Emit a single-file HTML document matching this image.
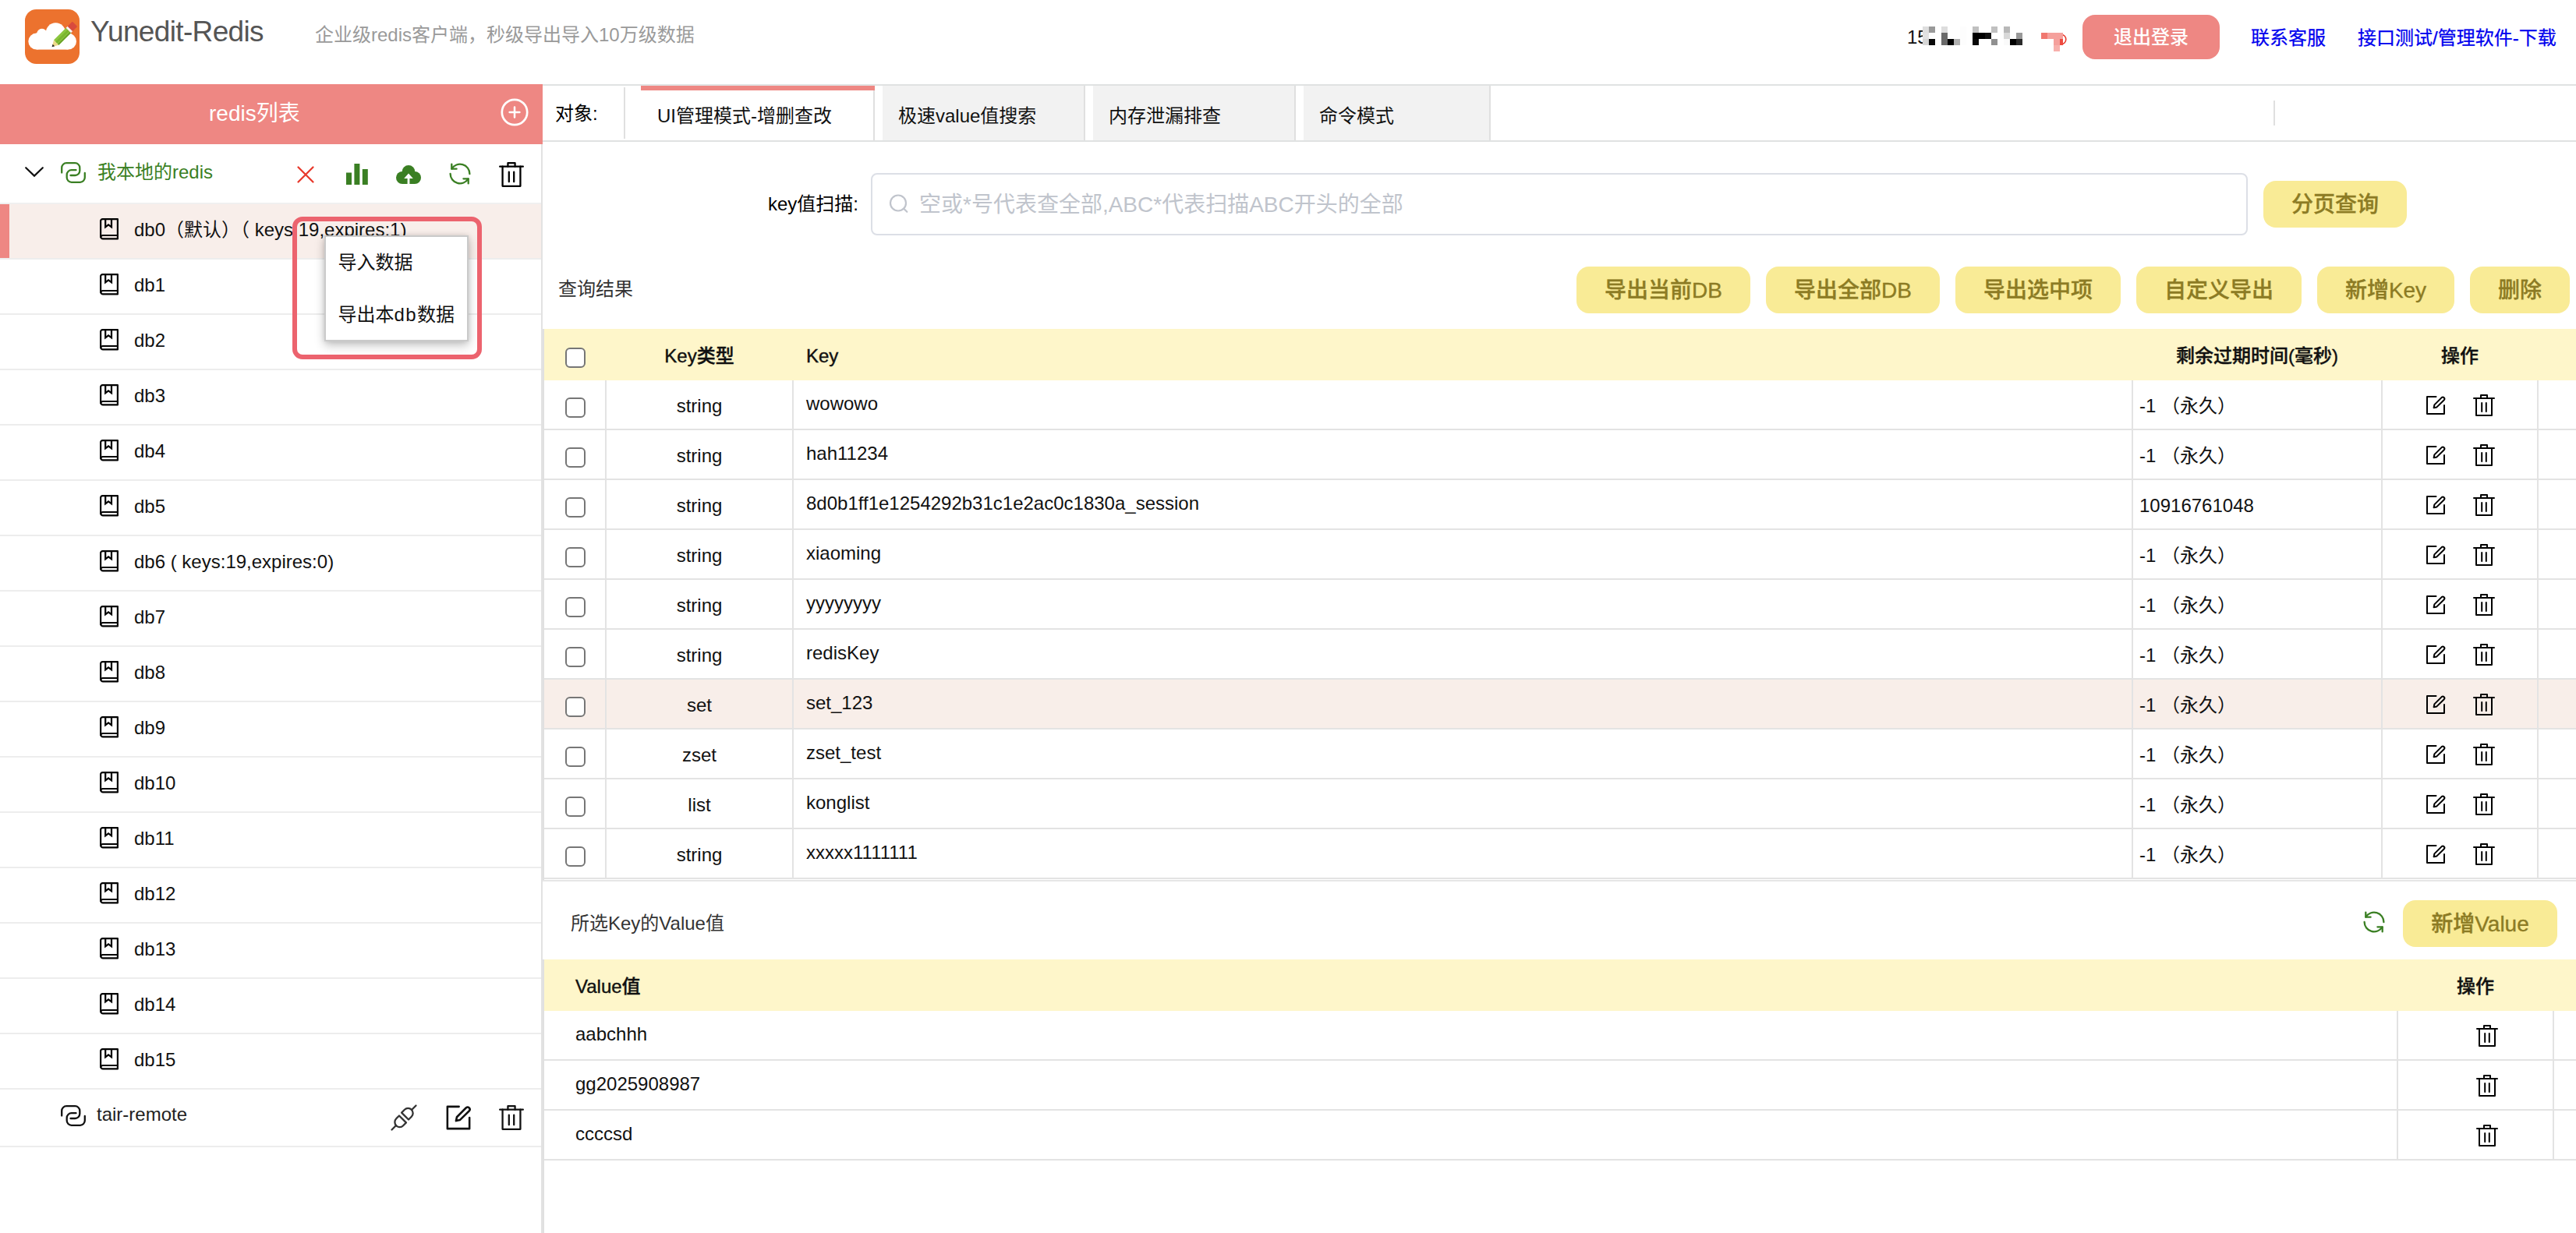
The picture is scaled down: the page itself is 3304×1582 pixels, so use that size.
<!DOCTYPE html>
<html lang="zh-CN"><head><meta charset="utf-8"><title>Yunedit-Redis</title>
<style>
*{box-sizing:border-box;margin:0;padding:0}
html,body{width:3304px;height:1582px;overflow:hidden;background:#fff}
body{position:relative;font-family:"Liberation Sans","Noto Sans CJK SC",sans-serif;color:#000;font-size:24px}
.abs{position:absolute}
svg{display:block;overflow:visible}
/* header */
#logo{left:32px;top:12px;width:70px;height:70px}
#brand{left:116px;top:17px;height:48px;line-height:48px;font-size:37px;letter-spacing:-.65px;color:#555;white-space:nowrap}
#slogan{left:404px;top:28px;height:34px;line-height:34px;font-size:24px;color:#9a9a9a;white-space:nowrap}
#phone{left:2446px;top:31px;height:34px;line-height:34px;font-size:24px;color:#111;white-space:nowrap}
#logout{left:2671px;top:19px;width:176px;height:57px;line-height:57px;border-radius:16px;background:#ee8783;color:#fff;font-size:24px;font-weight:500;text-align:center}
.lnk{-webkit-text-stroke:.25px #0000ee;color:#0000ee;font-size:24px;height:34px;line-height:34px;top:31.5px;white-space:nowrap}
/* sidebar */
#sbhead{left:0;top:108px;width:696px;height:77px;background:#ee8783}
#sbtitle{left:268px;top:128px;height:36px;line-height:36px;font-size:28px;color:#fff;white-space:nowrap}
#sbline{left:694px;top:185px;width:2px;height:1397px;background:#e2e2e2}
.srow{left:0;width:694px;height:71px;border-bottom:2px solid #ededed}
.srow.sel{background:#f8eeea;border-bottom-color:#ededed}
.srow.sel:before{content:"";position:absolute;left:0;top:0;width:12px;height:69px;background:#ee8783}

.srow .t{position:absolute;left:172px;top:15.5px;height:34px;line-height:34px;font-size:24px;white-space:nowrap;color:#111}
.crow{left:0;width:694px;height:77px;border-bottom:2px solid #ededed}
.crow .t{position:absolute;left:125px;top:19px;height:34px;line-height:34px;font-size:24px;white-space:nowrap}
.ic{position:absolute}
/* context menu */
#redbox{left:375px;top:278px;width:243px;height:183px;border:6px solid #ec636e;border-radius:13px}
#menu{left:416px;top:302px;width:185px;height:136px;background:#fff;border:2px solid #cacaca;box-shadow:0 5px 12px rgba(0,0,0,.24),0 0 6px rgba(0,0,0,.10)}
#menu div{position:absolute;left:15.5px;height:34px;line-height:34px;font-size:24px;white-space:nowrap;color:#111}
/* tabs */
#tabtop{left:696px;top:108px;width:2608px;height:2px;background:#e0e2e2}
#tabbot{left:696px;top:180px;width:2608px;height:2px;background:#e0e2e2}
#objlabel{left:712px;top:129px;height:34px;line-height:34px;font-size:24px;white-space:nowrap}
.vdiv{width:2px;background:#e0e0e0}
.tab{top:110px;height:70px;background:#f2f2f2;border-right:2px solid #e0e0e0;font-size:24px;line-height:34px;padding:22px 0 0 20px;white-space:nowrap;color:#111}
.tab.on{background:#fff}
.tab.on:before{content:"";position:absolute;left:0;top:0;right:-2px;height:6px;background:#ee8783}
/* search */
#klabel{left:985px;top:245px;height:34px;line-height:34px;font-size:24px;white-space:nowrap}
#kinput{left:1117px;top:222px;width:1766px;height:80px;border:2px solid #dcdfe6;border-radius:8px;background:#fff}
#kinput span{position:absolute;left:60px;top:20px;height:38px;line-height:38px;font-size:28px;color:#c0c4cc;white-space:nowrap}
.btn{height:60px;line-height:60px;border-radius:16px;background:#f9eb96;color:#8c7b24;font-size:28px;font-weight:500;padding-top:1px;-webkit-text-stroke:.35px #8c7b24;text-align:center;white-space:nowrap}
#qlabel{left:716px;top:354px;height:34px;line-height:34px;font-size:24px;color:#333;white-space:nowrap}
/* tables */
.thead{background:#fef6ca;left:698px;width:2606px;height:66px}
.th{position:absolute;top:2px;height:66px;line-height:66px;font-size:24px;font-weight:500;-webkit-text-stroke:.4px #111;white-space:nowrap;color:#111}
.tr{left:698px;width:2606px;height:64px;border-bottom:2px solid #e3e3e3;background:#fff}
.tr.sel{background:#f8eee9}
.td{position:absolute;top:0;height:62px;line-height:62px;font-size:24px;white-space:nowrap;color:#111}
.vb{position:absolute;top:0;width:2px;height:64px;background:#e3e3e3}
.cb{position:absolute;left:27px;width:26px;height:26px;border:2px solid #767676;border-radius:6px;background:#fff}
.tl{left:696px;width:2px;background:#e0e0e0}
.td.ty{top:2px}.td.k{top:-1px}.td.ex{top:1.5px}
</style></head>
<body>
<svg class="abs" id="logo" width="70" height="70" viewBox="0 0 70 70">
<rect width="70" height="70" rx="14.5" fill="#ec722e"/>
<g fill="#fff"><circle cx="39.4" cy="29.8" r="12.6"/><circle cx="21.8" cy="31.4" r="6.6"/><circle cx="14.8" cy="41.1" r="10.5"/><circle cx="55.5" cy="41.1" r="10.5"/><rect x="14.8" y="30" width="40.7" height="21.6"/></g>
<g transform="translate(34.6 48.2) rotate(-45)">
<path d="M0 0L8 -4.5V4.5Z" fill="#ecd98a"/><path d="M0 0L3.2 -1.8V1.8Z" fill="#222"/>
<rect x="8" y="-4.5" width="22" height="9" fill="#8cc63f"/><rect x="8" y="-1.5" width="22" height="3" fill="#7ab52f"/><rect x="8" y="2.6" width="22" height="1.9" fill="#6aa12a"/>
<rect x="30" y="-4.5" width="3" height="9" fill="#f4f4f4"/><rect x="33" y="-4.5" width="8.6" height="9" rx="1" fill="#d94a3d"/></g>
</svg>
<div class="abs" id="brand">Yunedit-Redis</div>
<div class="abs" id="slogan">企业级redis客户端，秒级导出导入10万级数据</div>
<div class="abs" id="phone">15</div>
<svg class="abs" style="left:0;top:0" width="3304" height="100" viewBox="0 0 3304 100"><rect x="2466" y="34" width="8" height="8" fill="#dedede"/><rect x="2466" y="42" width="8" height="8" fill="#e2e2e2"/><rect x="2466" y="50" width="8" height="8" fill="#d6d6d6"/><rect x="2474" y="34" width="8" height="8" fill="#999"/><rect x="2474" y="42" width="8" height="8" fill="#fcfcfc"/><rect x="2474" y="50" width="8" height="8" fill="#0a0a0a"/><rect x="2490" y="34" width="8" height="8" fill="#ddd"/><rect x="2490" y="42" width="8" height="8" fill="#6a6a6a"/><rect x="2490" y="50" width="8" height="8" fill="#6a6a6a"/><rect x="2498" y="50" width="8" height="8" fill="#000"/><rect x="2506" y="50" width="8" height="8" fill="#b0b0b0"/><rect x="2514" y="34" width="8" height="8" fill="#fdfdfd"/><rect x="2514" y="42" width="8" height="8" fill="#fdfdfd"/><rect x="2514" y="50" width="8" height="8" fill="#fdfdfd"/><rect x="2530" y="34" width="8" height="8" fill="#c0c0c0"/><rect x="2530" y="42" width="8" height="8" fill="#000"/><rect x="2530" y="50" width="8" height="8" fill="#080808"/><rect x="2538" y="42" width="8" height="8" fill="#000"/><rect x="2546" y="42" width="8" height="8" fill="#111"/><rect x="2554" y="34" width="8" height="8" fill="#c0c0c0"/><rect x="2554" y="50" width="8" height="8" fill="#909090"/><rect x="2570" y="34" width="8" height="8" fill="#b8b8b8"/><rect x="2570" y="42" width="8" height="8" fill="#d8d8d8"/><rect x="2570" y="50" width="8" height="8" fill="#fafafa"/><rect x="2578" y="50" width="8" height="8" fill="#000"/><rect x="2586" y="42" width="8" height="8" fill="#999"/><rect x="2586" y="50" width="8" height="8" fill="#2a2a2a"/><circle cx="2643.5" cy="50.5" r="6.3" fill="none" stroke="#e8392c" stroke-width="1.6"/><rect x="2618" y="42" width="8" height="8" fill="#f07870"/><rect x="2626" y="42" width="8" height="8" fill="#f5a09c"/><rect x="2634" y="42" width="8" height="8" fill="#f5a09c"/><rect x="2642" y="42" width="4" height="8" fill="#f5a09c"/><rect x="2634" y="50" width="8" height="8" fill="#f5a09c"/><rect x="2642" y="50" width="4" height="8" fill="#ee4a40"/><rect x="2634" y="58" width="8" height="8" fill="#f7b0ac"/></svg>
<div class="abs" id="logout">退出登录</div>
<div class="abs lnk" style="left:2887px">联系客服</div>
<div class="abs lnk" style="left:3024px">接口测试/管理软件-下载</div>
<div class="abs" id="sbhead"></div><div class="abs" id="sbtitle">redis列表</div>
<svg class="ic" style="left:642px;top:126px" width="36" height="36" viewBox="0 0 36 36" ><g fill="none" stroke="#fff" stroke-width="2.7" stroke-linecap="round"><circle cx="18" cy="18" r="16.2"/><path d="M11.6 18H24.4M18 11.6V24.4" stroke-width="2.5"/></g></svg>
<div class="abs" id="sbline"></div>
<div class="abs crow" style="top:185px;border-bottom-color:#f0f0f0"><div class="t" style="color:#3a7f23">我本地的redis</div><svg class="ic" style="left:32px;top:29px" width="24" height="13" viewBox="0 0 24 13" ><path d="M1.2 1.2L12 11.6L22.8 1.2" fill="none" stroke="#111" stroke-width="2.2" stroke-linecap="round" stroke-linejoin="miter"/></svg><svg class="ic" style="left:78px;top:23px" width="32" height="27" viewBox="0 0 32 27" ><g fill="none" stroke="#3a7f23" stroke-width="2.3" stroke-linecap="round"><path d="M1.2 13.5V7.2a6 6 0 0 1 6-6H18.3a6 6 0 0 1 6 6V11a6 6 0 0 1-6 6H12.5"/><path d="M30.8 14V19.8a6 6 0 0 1-6 6H13.7a6 6 0 0 1-6-6V16.2a6 6 0 0 1 6-6H19.5"/></g></svg><svg class="ic" style="left:381px;top:28px" width="22" height="22" viewBox="0 0 22 22" ><path d="M1.5 1.5L20.5 20.5M20.5 1.5L1.5 20.5" fill="none" stroke="#e8392c" stroke-width="2.3" stroke-linecap="round"/></svg><svg class="ic" style="left:444px;top:25px" width="28" height="27" viewBox="0 0 28 27" ><g fill="#3a7f23"><rect x="0" y="11.5" width="7" height="15.5"/><rect x="10.4" y="0" width="7" height="27"/><rect x="20.8" y="7" width="7" height="20"/></g></svg><svg class="ic" style="left:508px;top:27px" width="32" height="24" viewBox="0 0 32 24" ><g fill="#3a7f23"><circle cx="16" cy="8.4" r="8.4"/><circle cx="8" cy="16" r="8"/><circle cx="24" cy="16" r="8"/><rect x="8" y="12" width="16" height="12"/></g><path d="M16 10.4L21.8 17H17.4V24.2H14.6V17H10.2Z" fill="#fff"/></svg><svg class="ic" style="left:576px;top:24px" width="28" height="28" viewBox="0 0 28 28" ><g fill="none" stroke="#3a7f23" stroke-width="2.3" stroke-linecap="round" stroke-linejoin="round"><path d="M3.4 7.6A12.4 12.4 0 0 1 26.4 14.2"/><path d="M3.3 1.6V7.7H9.6"/><path d="M1.6 14A12.4 12.4 0 0 0 24.6 20.4"/><path d="M18.4 20.3H24.7V26.4"/></g></svg><svg class="ic" style="left:640px;top:22.5px" width="32" height="32" viewBox="0 0 28 28" ><g fill="none" stroke="#000" stroke-width="2" stroke-linecap="round" stroke-linejoin="round"><path d="M1 5H27"/><path d="M10 5V1H18V5"/><path d="M4 5V27H24V5"/><path d="M11.2 11V22M16.8 11V22"/></g></svg></div>
<div class="abs srow sel" style="top:262px"><svg class="ic" style="left:128px;top:18px" width="24" height="28" viewBox="0 0 24 28" ><g fill="none" stroke="#000" stroke-width="2.2" stroke-linejoin="round" stroke-linecap="round"><path d="M3.6 1.1H22.9V26.4H4.1a3 3 0 0 1-3-3V3.6a2.5 2.5 0 0 1 2.5-2.5Z"/><path d="M1.3 24.2a2.6 2.6 0 0 1 2.6-2.2H22.6"/><path d="M7.2 1.5V11.3L11.1 8.4L15 11.3V1.5" stroke-linejoin="miter"/></g></svg><div class="t">db0（默认）（ keys:19,expires:1)</div></div>
<div class="abs srow" style="top:333px"><svg class="ic" style="left:128px;top:18px" width="24" height="28" viewBox="0 0 24 28" ><g fill="none" stroke="#000" stroke-width="2.2" stroke-linejoin="round" stroke-linecap="round"><path d="M3.6 1.1H22.9V26.4H4.1a3 3 0 0 1-3-3V3.6a2.5 2.5 0 0 1 2.5-2.5Z"/><path d="M1.3 24.2a2.6 2.6 0 0 1 2.6-2.2H22.6"/><path d="M7.2 1.5V11.3L11.1 8.4L15 11.3V1.5" stroke-linejoin="miter"/></g></svg><div class="t">db1</div></div>
<div class="abs srow" style="top:404px"><svg class="ic" style="left:128px;top:18px" width="24" height="28" viewBox="0 0 24 28" ><g fill="none" stroke="#000" stroke-width="2.2" stroke-linejoin="round" stroke-linecap="round"><path d="M3.6 1.1H22.9V26.4H4.1a3 3 0 0 1-3-3V3.6a2.5 2.5 0 0 1 2.5-2.5Z"/><path d="M1.3 24.2a2.6 2.6 0 0 1 2.6-2.2H22.6"/><path d="M7.2 1.5V11.3L11.1 8.4L15 11.3V1.5" stroke-linejoin="miter"/></g></svg><div class="t">db2</div></div>
<div class="abs srow" style="top:475px"><svg class="ic" style="left:128px;top:18px" width="24" height="28" viewBox="0 0 24 28" ><g fill="none" stroke="#000" stroke-width="2.2" stroke-linejoin="round" stroke-linecap="round"><path d="M3.6 1.1H22.9V26.4H4.1a3 3 0 0 1-3-3V3.6a2.5 2.5 0 0 1 2.5-2.5Z"/><path d="M1.3 24.2a2.6 2.6 0 0 1 2.6-2.2H22.6"/><path d="M7.2 1.5V11.3L11.1 8.4L15 11.3V1.5" stroke-linejoin="miter"/></g></svg><div class="t">db3</div></div>
<div class="abs srow" style="top:546px"><svg class="ic" style="left:128px;top:18px" width="24" height="28" viewBox="0 0 24 28" ><g fill="none" stroke="#000" stroke-width="2.2" stroke-linejoin="round" stroke-linecap="round"><path d="M3.6 1.1H22.9V26.4H4.1a3 3 0 0 1-3-3V3.6a2.5 2.5 0 0 1 2.5-2.5Z"/><path d="M1.3 24.2a2.6 2.6 0 0 1 2.6-2.2H22.6"/><path d="M7.2 1.5V11.3L11.1 8.4L15 11.3V1.5" stroke-linejoin="miter"/></g></svg><div class="t">db4</div></div>
<div class="abs srow" style="top:617px"><svg class="ic" style="left:128px;top:18px" width="24" height="28" viewBox="0 0 24 28" ><g fill="none" stroke="#000" stroke-width="2.2" stroke-linejoin="round" stroke-linecap="round"><path d="M3.6 1.1H22.9V26.4H4.1a3 3 0 0 1-3-3V3.6a2.5 2.5 0 0 1 2.5-2.5Z"/><path d="M1.3 24.2a2.6 2.6 0 0 1 2.6-2.2H22.6"/><path d="M7.2 1.5V11.3L11.1 8.4L15 11.3V1.5" stroke-linejoin="miter"/></g></svg><div class="t">db5</div></div>
<div class="abs srow" style="top:688px"><svg class="ic" style="left:128px;top:18px" width="24" height="28" viewBox="0 0 24 28" ><g fill="none" stroke="#000" stroke-width="2.2" stroke-linejoin="round" stroke-linecap="round"><path d="M3.6 1.1H22.9V26.4H4.1a3 3 0 0 1-3-3V3.6a2.5 2.5 0 0 1 2.5-2.5Z"/><path d="M1.3 24.2a2.6 2.6 0 0 1 2.6-2.2H22.6"/><path d="M7.2 1.5V11.3L11.1 8.4L15 11.3V1.5" stroke-linejoin="miter"/></g></svg><div class="t">db6 ( keys:19,expires:0)</div></div>
<div class="abs srow" style="top:759px"><svg class="ic" style="left:128px;top:18px" width="24" height="28" viewBox="0 0 24 28" ><g fill="none" stroke="#000" stroke-width="2.2" stroke-linejoin="round" stroke-linecap="round"><path d="M3.6 1.1H22.9V26.4H4.1a3 3 0 0 1-3-3V3.6a2.5 2.5 0 0 1 2.5-2.5Z"/><path d="M1.3 24.2a2.6 2.6 0 0 1 2.6-2.2H22.6"/><path d="M7.2 1.5V11.3L11.1 8.4L15 11.3V1.5" stroke-linejoin="miter"/></g></svg><div class="t">db7</div></div>
<div class="abs srow" style="top:830px"><svg class="ic" style="left:128px;top:18px" width="24" height="28" viewBox="0 0 24 28" ><g fill="none" stroke="#000" stroke-width="2.2" stroke-linejoin="round" stroke-linecap="round"><path d="M3.6 1.1H22.9V26.4H4.1a3 3 0 0 1-3-3V3.6a2.5 2.5 0 0 1 2.5-2.5Z"/><path d="M1.3 24.2a2.6 2.6 0 0 1 2.6-2.2H22.6"/><path d="M7.2 1.5V11.3L11.1 8.4L15 11.3V1.5" stroke-linejoin="miter"/></g></svg><div class="t">db8</div></div>
<div class="abs srow" style="top:901px"><svg class="ic" style="left:128px;top:18px" width="24" height="28" viewBox="0 0 24 28" ><g fill="none" stroke="#000" stroke-width="2.2" stroke-linejoin="round" stroke-linecap="round"><path d="M3.6 1.1H22.9V26.4H4.1a3 3 0 0 1-3-3V3.6a2.5 2.5 0 0 1 2.5-2.5Z"/><path d="M1.3 24.2a2.6 2.6 0 0 1 2.6-2.2H22.6"/><path d="M7.2 1.5V11.3L11.1 8.4L15 11.3V1.5" stroke-linejoin="miter"/></g></svg><div class="t">db9</div></div>
<div class="abs srow" style="top:972px"><svg class="ic" style="left:128px;top:18px" width="24" height="28" viewBox="0 0 24 28" ><g fill="none" stroke="#000" stroke-width="2.2" stroke-linejoin="round" stroke-linecap="round"><path d="M3.6 1.1H22.9V26.4H4.1a3 3 0 0 1-3-3V3.6a2.5 2.5 0 0 1 2.5-2.5Z"/><path d="M1.3 24.2a2.6 2.6 0 0 1 2.6-2.2H22.6"/><path d="M7.2 1.5V11.3L11.1 8.4L15 11.3V1.5" stroke-linejoin="miter"/></g></svg><div class="t">db10</div></div>
<div class="abs srow" style="top:1043px"><svg class="ic" style="left:128px;top:18px" width="24" height="28" viewBox="0 0 24 28" ><g fill="none" stroke="#000" stroke-width="2.2" stroke-linejoin="round" stroke-linecap="round"><path d="M3.6 1.1H22.9V26.4H4.1a3 3 0 0 1-3-3V3.6a2.5 2.5 0 0 1 2.5-2.5Z"/><path d="M1.3 24.2a2.6 2.6 0 0 1 2.6-2.2H22.6"/><path d="M7.2 1.5V11.3L11.1 8.4L15 11.3V1.5" stroke-linejoin="miter"/></g></svg><div class="t">db11</div></div>
<div class="abs srow" style="top:1114px"><svg class="ic" style="left:128px;top:18px" width="24" height="28" viewBox="0 0 24 28" ><g fill="none" stroke="#000" stroke-width="2.2" stroke-linejoin="round" stroke-linecap="round"><path d="M3.6 1.1H22.9V26.4H4.1a3 3 0 0 1-3-3V3.6a2.5 2.5 0 0 1 2.5-2.5Z"/><path d="M1.3 24.2a2.6 2.6 0 0 1 2.6-2.2H22.6"/><path d="M7.2 1.5V11.3L11.1 8.4L15 11.3V1.5" stroke-linejoin="miter"/></g></svg><div class="t">db12</div></div>
<div class="abs srow" style="top:1185px"><svg class="ic" style="left:128px;top:18px" width="24" height="28" viewBox="0 0 24 28" ><g fill="none" stroke="#000" stroke-width="2.2" stroke-linejoin="round" stroke-linecap="round"><path d="M3.6 1.1H22.9V26.4H4.1a3 3 0 0 1-3-3V3.6a2.5 2.5 0 0 1 2.5-2.5Z"/><path d="M1.3 24.2a2.6 2.6 0 0 1 2.6-2.2H22.6"/><path d="M7.2 1.5V11.3L11.1 8.4L15 11.3V1.5" stroke-linejoin="miter"/></g></svg><div class="t">db13</div></div>
<div class="abs srow" style="top:1256px"><svg class="ic" style="left:128px;top:18px" width="24" height="28" viewBox="0 0 24 28" ><g fill="none" stroke="#000" stroke-width="2.2" stroke-linejoin="round" stroke-linecap="round"><path d="M3.6 1.1H22.9V26.4H4.1a3 3 0 0 1-3-3V3.6a2.5 2.5 0 0 1 2.5-2.5Z"/><path d="M1.3 24.2a2.6 2.6 0 0 1 2.6-2.2H22.6"/><path d="M7.2 1.5V11.3L11.1 8.4L15 11.3V1.5" stroke-linejoin="miter"/></g></svg><div class="t">db14</div></div>
<div class="abs srow" style="top:1327px"><svg class="ic" style="left:128px;top:18px" width="24" height="28" viewBox="0 0 24 28" ><g fill="none" stroke="#000" stroke-width="2.2" stroke-linejoin="round" stroke-linecap="round"><path d="M3.6 1.1H22.9V26.4H4.1a3 3 0 0 1-3-3V3.6a2.5 2.5 0 0 1 2.5-2.5Z"/><path d="M1.3 24.2a2.6 2.6 0 0 1 2.6-2.2H22.6"/><path d="M7.2 1.5V11.3L11.1 8.4L15 11.3V1.5" stroke-linejoin="miter"/></g></svg><div class="t">db15</div></div>
<div class="abs crow" style="top:1398px;height:74px"><div class="t" style="left:124px;top:14.5px;color:#222">tair-remote</div><svg class="ic" style="left:78px;top:20px" width="32" height="27" viewBox="0 0 32 27" ><g fill="none" stroke="#111" stroke-width="2.3" stroke-linecap="round"><path d="M1.2 13.5V7.2a6 6 0 0 1 6-6H18.3a6 6 0 0 1 6 6V11a6 6 0 0 1-6 6H12.5"/><path d="M30.8 14V19.8a6 6 0 0 1-6 6H13.7a6 6 0 0 1-6-6V16.2a6 6 0 0 1 6-6H19.5"/></g></svg><svg class="ic" style="left:501px;top:19px" width="34" height="34" viewBox="0 0 34 34" ><g fill="none" stroke="#333" stroke-width="2.3" stroke-linecap="round" stroke-linejoin="round"><path d="M1.5 32.5L7 27"/><path d="M27 7L32.5 1.5"/><path d="M7.2 27.2a6.3 6.3 0 0 1 0-8.9L11 14.5L19.9 23.4L16.1 27.2a6.3 6.3 0 0 1-8.9 0Z"/><path d="M26.8 6.8a6.3 6.3 0 0 1 0 8.9L23 19.5L14.1 10.6L17.9 6.8a6.3 6.3 0 0 1 8.9 0Z"/></g></svg><svg class="ic" style="left:570.4px;top:17.8px" width="36" height="36" viewBox="0 0 28 28" ><g fill="none" stroke="#111" stroke-width="2" stroke-linecap="round" stroke-linejoin="round"><path d="M14.5 3H3V25H25V14"/><path d="M11.6 17.2L12.4 13.4L21.7 4.1a2.2 2.2 0 0 1 3.1 3.1L15.4 16.4Z"/></g></svg><svg class="ic" style="left:640px;top:19.5px" width="32" height="32" viewBox="0 0 28 28" ><g fill="none" stroke="#111" stroke-width="2" stroke-linecap="round" stroke-linejoin="round"><path d="M1 5H27"/><path d="M10 5V1H18V5"/><path d="M4 5V27H24V5"/><path d="M11.2 11V22M16.8 11V22"/></g></svg></div>
<div class="abs" id="menu"><div style="top:16px">导入数据</div><div style="top:82.5px">导出本<span style="letter-spacing:1.4px">db</span>数据</div></div>
<div class="abs" id="redbox"></div>
<div class="abs" id="tabtop"></div><div class="abs" id="tabbot"></div>
<div class="abs" id="objlabel">对象:</div>
<div class="abs vdiv" style="left:800px;top:112px;height:66px"></div>
<div class="abs vdiv" style="left:2916px;top:129px;height:32px"></div>
<div class="abs tab on" style="left:822px;width:300px;padding-left:21px">UI管理模式-增删查改</div>
<div class="abs tab" style="left:1132px;width:260px">极速value值搜索</div>
<div class="abs tab" style="left:1402px;width:260px">内存泄漏排查</div>
<div class="abs tab" style="left:1672px;width:240px">命令模式</div>
<div class="abs" id="klabel">key值扫描:</div>
<div class="abs" id="kinput"><svg class="ic" style="left:22px;top:25px" width="26" height="26" viewBox="0 0 26 26" ><g fill="none" stroke="#c0c4cc" stroke-width="2.2" stroke-linecap="round"><circle cx="11" cy="11.5" r="10"/><path d="M18.5 19L22.3 22.8"/></g></svg><span>空或*号代表查全部,ABC*代表扫描ABC开头的全部</span></div>
<div class="abs btn" style="left:2903px;top:232px;width:184px">分页查询</div>
<div class="abs" id="qlabel">查询结果</div>
<div class="abs btn" style="left:2022px;top:342px;width:223px">导出当前DB</div>
<div class="abs btn" style="left:2265px;top:342px;width:223px">导出全部DB</div>
<div class="abs btn" style="left:2508px;top:342px;width:212px">导出选中项</div>
<div class="abs btn" style="left:2740px;top:342px;width:212px">自定义导出</div>
<div class="abs btn" style="left:2972px;top:342px;width:176px">新增Key</div>
<div class="abs btn" style="left:3168px;top:342px;width:128px">删除</div>
<div class="abs thead" style="top:422px"><div class="cb" style="top:24px"></div><div class="th" style="left:79px;width:240px;text-align:center">Key类型</div><div class="th" style="left:336px">Key</div><div class="th" style="left:2037px;width:320px;text-align:center">剩余过期时间(毫秒)</div><div class="th" style="left:2357px;width:200px;text-align:center">操作</div></div>
<div class="abs tr" style="top:488px"><div class="cb" style="top:22px"></div><div class="vb" style="left:78px"></div><div class="vb" style="left:318px"></div><div class="vb" style="left:2036px"></div><div class="vb" style="left:2356px"></div><div class="vb" style="left:2556px"></div><div class="td ty" style="left:79px;width:240px;text-align:center">string</div><div class="td k" style="left:336px">wowowo</div><div class="td ex" style="left:2046px">-1 （永久）</div><svg class="ic" style="left:2412px;top:18px" width="28" height="28" viewBox="0 0 28 28" ><g fill="none" stroke="#000" stroke-width="2" stroke-linecap="round" stroke-linejoin="round"><path d="M14.5 3H3V25H25V14"/><path d="M11.6 17.2L12.4 13.4L21.7 4.1a2.2 2.2 0 0 1 3.1 3.1L15.4 16.4Z"/></g></svg><svg class="ic" style="left:2474px;top:18px" width="28" height="28" viewBox="0 0 28 28" ><g fill="none" stroke="#000" stroke-width="2" stroke-linecap="round" stroke-linejoin="round"><path d="M1 5H27"/><path d="M10 5V1H18V5"/><path d="M4 5V27H24V5"/><path d="M11.2 11V22M16.8 11V22"/></g></svg></div>
<div class="abs tr" style="top:552px"><div class="cb" style="top:22px"></div><div class="vb" style="left:78px"></div><div class="vb" style="left:318px"></div><div class="vb" style="left:2036px"></div><div class="vb" style="left:2356px"></div><div class="vb" style="left:2556px"></div><div class="td ty" style="left:79px;width:240px;text-align:center">string</div><div class="td k" style="left:336px">hah11234</div><div class="td ex" style="left:2046px">-1 （永久）</div><svg class="ic" style="left:2412px;top:18px" width="28" height="28" viewBox="0 0 28 28" ><g fill="none" stroke="#000" stroke-width="2" stroke-linecap="round" stroke-linejoin="round"><path d="M14.5 3H3V25H25V14"/><path d="M11.6 17.2L12.4 13.4L21.7 4.1a2.2 2.2 0 0 1 3.1 3.1L15.4 16.4Z"/></g></svg><svg class="ic" style="left:2474px;top:18px" width="28" height="28" viewBox="0 0 28 28" ><g fill="none" stroke="#000" stroke-width="2" stroke-linecap="round" stroke-linejoin="round"><path d="M1 5H27"/><path d="M10 5V1H18V5"/><path d="M4 5V27H24V5"/><path d="M11.2 11V22M16.8 11V22"/></g></svg></div>
<div class="abs tr" style="top:616px"><div class="cb" style="top:22px"></div><div class="vb" style="left:78px"></div><div class="vb" style="left:318px"></div><div class="vb" style="left:2036px"></div><div class="vb" style="left:2356px"></div><div class="vb" style="left:2556px"></div><div class="td ty" style="left:79px;width:240px;text-align:center">string</div><div class="td k" style="left:336px">8d0b1ff1e1254292b31c1e2ac0c1830a_session</div><div class="td ex" style="left:2046px">10916761048</div><svg class="ic" style="left:2412px;top:18px" width="28" height="28" viewBox="0 0 28 28" ><g fill="none" stroke="#000" stroke-width="2" stroke-linecap="round" stroke-linejoin="round"><path d="M14.5 3H3V25H25V14"/><path d="M11.6 17.2L12.4 13.4L21.7 4.1a2.2 2.2 0 0 1 3.1 3.1L15.4 16.4Z"/></g></svg><svg class="ic" style="left:2474px;top:18px" width="28" height="28" viewBox="0 0 28 28" ><g fill="none" stroke="#000" stroke-width="2" stroke-linecap="round" stroke-linejoin="round"><path d="M1 5H27"/><path d="M10 5V1H18V5"/><path d="M4 5V27H24V5"/><path d="M11.2 11V22M16.8 11V22"/></g></svg></div>
<div class="abs tr" style="top:680px"><div class="cb" style="top:22px"></div><div class="vb" style="left:78px"></div><div class="vb" style="left:318px"></div><div class="vb" style="left:2036px"></div><div class="vb" style="left:2356px"></div><div class="vb" style="left:2556px"></div><div class="td ty" style="left:79px;width:240px;text-align:center">string</div><div class="td k" style="left:336px">xiaoming</div><div class="td ex" style="left:2046px">-1 （永久）</div><svg class="ic" style="left:2412px;top:18px" width="28" height="28" viewBox="0 0 28 28" ><g fill="none" stroke="#000" stroke-width="2" stroke-linecap="round" stroke-linejoin="round"><path d="M14.5 3H3V25H25V14"/><path d="M11.6 17.2L12.4 13.4L21.7 4.1a2.2 2.2 0 0 1 3.1 3.1L15.4 16.4Z"/></g></svg><svg class="ic" style="left:2474px;top:18px" width="28" height="28" viewBox="0 0 28 28" ><g fill="none" stroke="#000" stroke-width="2" stroke-linecap="round" stroke-linejoin="round"><path d="M1 5H27"/><path d="M10 5V1H18V5"/><path d="M4 5V27H24V5"/><path d="M11.2 11V22M16.8 11V22"/></g></svg></div>
<div class="abs tr" style="top:744px"><div class="cb" style="top:22px"></div><div class="vb" style="left:78px"></div><div class="vb" style="left:318px"></div><div class="vb" style="left:2036px"></div><div class="vb" style="left:2356px"></div><div class="vb" style="left:2556px"></div><div class="td ty" style="left:79px;width:240px;text-align:center">string</div><div class="td k" style="left:336px">yyyyyyyy</div><div class="td ex" style="left:2046px">-1 （永久）</div><svg class="ic" style="left:2412px;top:18px" width="28" height="28" viewBox="0 0 28 28" ><g fill="none" stroke="#000" stroke-width="2" stroke-linecap="round" stroke-linejoin="round"><path d="M14.5 3H3V25H25V14"/><path d="M11.6 17.2L12.4 13.4L21.7 4.1a2.2 2.2 0 0 1 3.1 3.1L15.4 16.4Z"/></g></svg><svg class="ic" style="left:2474px;top:18px" width="28" height="28" viewBox="0 0 28 28" ><g fill="none" stroke="#000" stroke-width="2" stroke-linecap="round" stroke-linejoin="round"><path d="M1 5H27"/><path d="M10 5V1H18V5"/><path d="M4 5V27H24V5"/><path d="M11.2 11V22M16.8 11V22"/></g></svg></div>
<div class="abs tr" style="top:808px"><div class="cb" style="top:22px"></div><div class="vb" style="left:78px"></div><div class="vb" style="left:318px"></div><div class="vb" style="left:2036px"></div><div class="vb" style="left:2356px"></div><div class="vb" style="left:2556px"></div><div class="td ty" style="left:79px;width:240px;text-align:center">string</div><div class="td k" style="left:336px">redisKey</div><div class="td ex" style="left:2046px">-1 （永久）</div><svg class="ic" style="left:2412px;top:18px" width="28" height="28" viewBox="0 0 28 28" ><g fill="none" stroke="#000" stroke-width="2" stroke-linecap="round" stroke-linejoin="round"><path d="M14.5 3H3V25H25V14"/><path d="M11.6 17.2L12.4 13.4L21.7 4.1a2.2 2.2 0 0 1 3.1 3.1L15.4 16.4Z"/></g></svg><svg class="ic" style="left:2474px;top:18px" width="28" height="28" viewBox="0 0 28 28" ><g fill="none" stroke="#000" stroke-width="2" stroke-linecap="round" stroke-linejoin="round"><path d="M1 5H27"/><path d="M10 5V1H18V5"/><path d="M4 5V27H24V5"/><path d="M11.2 11V22M16.8 11V22"/></g></svg></div>
<div class="abs tr sel" style="top:872px"><div class="cb" style="top:22px"></div><div class="vb" style="left:78px"></div><div class="vb" style="left:318px"></div><div class="vb" style="left:2036px"></div><div class="vb" style="left:2356px"></div><div class="vb" style="left:2556px"></div><div class="td ty" style="left:79px;width:240px;text-align:center">set</div><div class="td k" style="left:336px">set_123</div><div class="td ex" style="left:2046px">-1 （永久）</div><svg class="ic" style="left:2412px;top:18px" width="28" height="28" viewBox="0 0 28 28" ><g fill="none" stroke="#000" stroke-width="2" stroke-linecap="round" stroke-linejoin="round"><path d="M14.5 3H3V25H25V14"/><path d="M11.6 17.2L12.4 13.4L21.7 4.1a2.2 2.2 0 0 1 3.1 3.1L15.4 16.4Z"/></g></svg><svg class="ic" style="left:2474px;top:18px" width="28" height="28" viewBox="0 0 28 28" ><g fill="none" stroke="#000" stroke-width="2" stroke-linecap="round" stroke-linejoin="round"><path d="M1 5H27"/><path d="M10 5V1H18V5"/><path d="M4 5V27H24V5"/><path d="M11.2 11V22M16.8 11V22"/></g></svg></div>
<div class="abs tr" style="top:936px"><div class="cb" style="top:22px"></div><div class="vb" style="left:78px"></div><div class="vb" style="left:318px"></div><div class="vb" style="left:2036px"></div><div class="vb" style="left:2356px"></div><div class="vb" style="left:2556px"></div><div class="td ty" style="left:79px;width:240px;text-align:center">zset</div><div class="td k" style="left:336px">zset_test</div><div class="td ex" style="left:2046px">-1 （永久）</div><svg class="ic" style="left:2412px;top:18px" width="28" height="28" viewBox="0 0 28 28" ><g fill="none" stroke="#000" stroke-width="2" stroke-linecap="round" stroke-linejoin="round"><path d="M14.5 3H3V25H25V14"/><path d="M11.6 17.2L12.4 13.4L21.7 4.1a2.2 2.2 0 0 1 3.1 3.1L15.4 16.4Z"/></g></svg><svg class="ic" style="left:2474px;top:18px" width="28" height="28" viewBox="0 0 28 28" ><g fill="none" stroke="#000" stroke-width="2" stroke-linecap="round" stroke-linejoin="round"><path d="M1 5H27"/><path d="M10 5V1H18V5"/><path d="M4 5V27H24V5"/><path d="M11.2 11V22M16.8 11V22"/></g></svg></div>
<div class="abs tr" style="top:1000px"><div class="cb" style="top:22px"></div><div class="vb" style="left:78px"></div><div class="vb" style="left:318px"></div><div class="vb" style="left:2036px"></div><div class="vb" style="left:2356px"></div><div class="vb" style="left:2556px"></div><div class="td ty" style="left:79px;width:240px;text-align:center">list</div><div class="td k" style="left:336px">konglist</div><div class="td ex" style="left:2046px">-1 （永久）</div><svg class="ic" style="left:2412px;top:18px" width="28" height="28" viewBox="0 0 28 28" ><g fill="none" stroke="#000" stroke-width="2" stroke-linecap="round" stroke-linejoin="round"><path d="M14.5 3H3V25H25V14"/><path d="M11.6 17.2L12.4 13.4L21.7 4.1a2.2 2.2 0 0 1 3.1 3.1L15.4 16.4Z"/></g></svg><svg class="ic" style="left:2474px;top:18px" width="28" height="28" viewBox="0 0 28 28" ><g fill="none" stroke="#000" stroke-width="2" stroke-linecap="round" stroke-linejoin="round"><path d="M1 5H27"/><path d="M10 5V1H18V5"/><path d="M4 5V27H24V5"/><path d="M11.2 11V22M16.8 11V22"/></g></svg></div>
<div class="abs tr" style="top:1064px"><div class="cb" style="top:22px"></div><div class="vb" style="left:78px"></div><div class="vb" style="left:318px"></div><div class="vb" style="left:2036px"></div><div class="vb" style="left:2356px"></div><div class="vb" style="left:2556px"></div><div class="td ty" style="left:79px;width:240px;text-align:center">string</div><div class="td k" style="left:336px">xxxxx1111111</div><div class="td ex" style="left:2046px">-1 （永久）</div><svg class="ic" style="left:2412px;top:18px" width="28" height="28" viewBox="0 0 28 28" ><g fill="none" stroke="#000" stroke-width="2" stroke-linecap="round" stroke-linejoin="round"><path d="M14.5 3H3V25H25V14"/><path d="M11.6 17.2L12.4 13.4L21.7 4.1a2.2 2.2 0 0 1 3.1 3.1L15.4 16.4Z"/></g></svg><svg class="ic" style="left:2474px;top:18px" width="28" height="28" viewBox="0 0 28 28" ><g fill="none" stroke="#000" stroke-width="2" stroke-linecap="round" stroke-linejoin="round"><path d="M1 5H27"/><path d="M10 5V1H18V5"/><path d="M4 5V27H24V5"/><path d="M11.2 11V22M16.8 11V22"/></g></svg></div>
<div class="abs tl" style="top:422px;height:708px"></div><div class="abs tl" style="top:1231px;height:351px"></div>
<div class="abs" style="left:696px;top:1129px;width:2608px;height:2px;background:#e6e6e6"></div>
<div class="abs" id="vlabel" style="left:732px;top:1168px;height:34px;line-height:34px;font-size:24px;color:#333;white-space:nowrap">所选Key的Value值</div>
<svg class="ic" style="left:3031px;top:1169px" width="28" height="28" viewBox="0 0 28 28" ><g fill="none" stroke="#3a7f23" stroke-width="2.3" stroke-linecap="round" stroke-linejoin="round"><path d="M3.4 7.6A12.4 12.4 0 0 1 26.4 14.2"/><path d="M3.3 1.6V7.7H9.6"/><path d="M1.6 14A12.4 12.4 0 0 0 24.6 20.4"/><path d="M18.4 20.3H24.7V26.4"/></g></svg>
<div class="abs btn" style="left:3082px;top:1155px;width:198px">新增Value</div>
<div class="abs thead" style="top:1231px"><div class="th" style="left:40px">Value值</div><div class="th" style="left:2377px;width:200px;text-align:center">操作</div></div>
<div class="abs tr" style="top:1297px"><div class="vb" style="left:2376px"></div><div class="vb" style="left:2576px"></div><div class="td k" style="left:40px">aabchhh</div><svg class="ic" style="left:2478px;top:18px" width="28" height="28" viewBox="0 0 28 28" ><g fill="none" stroke="#000" stroke-width="2" stroke-linecap="round" stroke-linejoin="round"><path d="M1 5H27"/><path d="M10 5V1H18V5"/><path d="M4 5V27H24V5"/><path d="M11.2 11V22M16.8 11V22"/></g></svg></div>
<div class="abs tr" style="top:1361px"><div class="vb" style="left:2376px"></div><div class="vb" style="left:2576px"></div><div class="td k" style="left:40px">gg2025908987</div><svg class="ic" style="left:2478px;top:18px" width="28" height="28" viewBox="0 0 28 28" ><g fill="none" stroke="#000" stroke-width="2" stroke-linecap="round" stroke-linejoin="round"><path d="M1 5H27"/><path d="M10 5V1H18V5"/><path d="M4 5V27H24V5"/><path d="M11.2 11V22M16.8 11V22"/></g></svg></div>
<div class="abs tr" style="top:1425px"><div class="vb" style="left:2376px"></div><div class="vb" style="left:2576px"></div><div class="td k" style="left:40px">ccccsd</div><svg class="ic" style="left:2478px;top:18px" width="28" height="28" viewBox="0 0 28 28" ><g fill="none" stroke="#000" stroke-width="2" stroke-linecap="round" stroke-linejoin="round"><path d="M1 5H27"/><path d="M10 5V1H18V5"/><path d="M4 5V27H24V5"/><path d="M11.2 11V22M16.8 11V22"/></g></svg></div>
</body></html>
